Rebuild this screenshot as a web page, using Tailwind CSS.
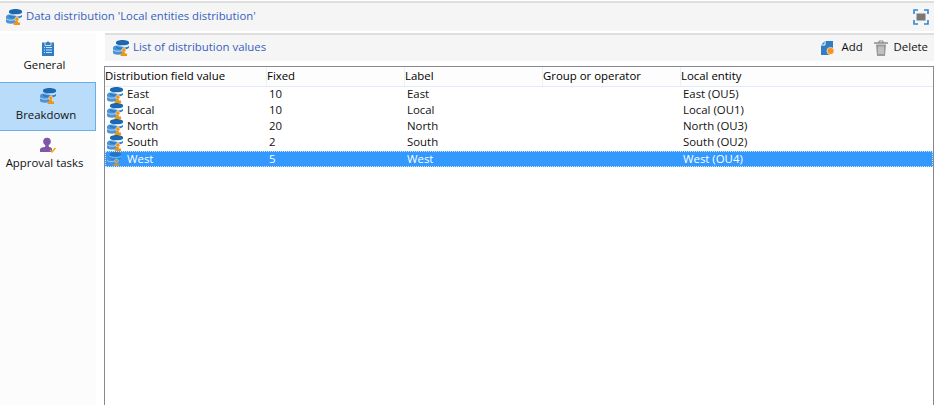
<!DOCTYPE html>
<html><head><meta charset="utf-8"><script src="https://cdn.jsdelivr.net/npm/@tailwindcss/browser@4"></script></head>
<body class="bg-white">
<svg width="0" height="0" class="absolute">
<defs>
<symbol id="db" viewBox="0 0 16 16">
<path d="M0 7.500C0 6.200 2.200 5.200 5 5.200s5 1 5 2.300v5C10 13.800 7.800 14.800 5 14.800s-5-1-5-2.300z" fill="#4a93d6"/>
<path d="M0 9.200c1 1 3 1.500 5 1.500s4-.5 5-1.500v.9c-1 1-3 1.500-5 1.500s-4-.5-5-1.500z" fill="#d5e7f7"/>
<path d="M3 2.300C3 1 5.800 0 9.500 0S16 1 16 2.300v1.500c-1.200 1-3.800 1.500-6.500 1.500S4.200 4.800 3 3.800z" fill="#1c68ae"/>
<path d="M3 4.600c1.200 1 3.800 1.500 6.500 1.500S14.800 5.600 16 4.600v.5c-1.200 1-3.800 1.500-6.500 1.500S4.200 6.100 3 5.100z" fill="#cfe2f4"/>
<path d="M3 5.900c1.200 1 3.800 1.500 6.500 1.500S14.800 6.900 16 5.900v1.300c0 1.300-2.900 2.300-6.500 2.300S3 8.500 3 7.200z" fill="#2b7cc4"/>
<circle cx="10.800" cy="10.200" r="2.100" fill="#f0950f" stroke="#fff" stroke-width=".5"/><path d="M10 12h1.600l.5 1.500H14V16H7.600v-2.500h1.900z" fill="#f0950f"/>
</symbol>
</defs>
</svg>
<div class="w-[934px] h-[405px] flex flex-col font-['Open_Sans','Noto_Sans',sans-serif] text-[11.4px] text-[#111]">
  <div class="h-[30px] mt-px shrink-0 flex items-center justify-between bg-[#f5f5f5] border-t-2 border-[#dedede] pl-[6px] pr-[5px]">
    <div class="flex items-center gap-[4px] text-[#3560c0]"><svg class="w-4 h-4"><use href="#db"/></svg><span class="-mt-[2px] text-[11.3px]">Data distribution 'Local entities distribution'</span></div>
    <svg width="16" height="16" viewBox="0 0 16 16" fill="none"><path d="M1 5V1h4M11 1h4v4M15 11v4h-4M5 15H1v-4" stroke="#2f86d6" stroke-width="1.600"/><rect x="3.500" y="4.500" width="9" height="7" fill="#787878"/></svg>
  </div>
  <div class="flex flex-1 min-h-0 mt-[2px]">
    <div class="w-[96px] shrink-0 bg-[#fcfcfc] text-center flex flex-col">
      <div class="h-[49px] flex flex-col items-center pt-[7px]">
        <svg width="16" height="16" viewBox="0 0 16 16"><path d="M2 2.500h12V16H2z" fill="#2f7dc4"/><path d="M5 2h2l1-2 1 2h2v3.500H5z" fill="#2f7dc4" stroke="#fff" stroke-width=".7"/><path d="M4 7.500h1M6 7.500h6M4 10h1M6 10h6M4 12.500h1M6 12.500h6" stroke="#cfe4f7"/></svg>
        <span class="leading-[18px] mr-[7px]">General</span>
      </div>
      <div class="h-[49px] flex flex-col items-center pt-[5px] bg-[#b9dcfb] border-y border-r border-[#68aee8]">
        <svg class="w-4 h-4"><use href="#db"/></svg>
        <span class="mt-[2px] leading-[18px] mr-[3px]">Breakdown</span>
      </div>
      <div class="flex flex-col items-center pt-[6px]">
        <svg width="18" height="17" viewBox="0 0 18 17"><circle cx="8" cy="4.500" r="3.800" fill="#7f57a8"/><path d="M6.500 7.500h3L10 10c2 .3 3 1 3 2.500v2.500H1v-2.500C1 11 3 10.300 6 10z" fill="#7f57a8"/><path d="M11 13l2 2 3.500-4" fill="none" stroke="#f0a020" stroke-width="1.400"/></svg>
        <span class="leading-[18px] mr-[7px]">Approval tasks</span>
      </div>
    </div>
    <div class="flex-1 min-w-0 ml-[8px] flex flex-col">
      <div class="h-[28px] ml-[1px] shrink-0 flex items-center justify-between bg-[#f5f5f5] border-t-2 border-[#dedede] pl-[8px] pr-[6px]">
        <div class="flex items-center gap-[4px] text-[#3560c0]"><svg class="w-4 h-4"><use href="#db"/></svg><span class="-mt-[2px]">List of distribution values</span></div>
        <div class="flex items-center">
          <svg width="16" height="16" viewBox="0 0 16 16"><path d="M1 5l4-4h8v8l-4 6H1z" fill="#2f7dc4"/><path d="M5 1v4H1" fill="none" stroke="#fff"/><circle cx="10.500" cy="11" r="3.600" fill="#f7931e" stroke="#fff" stroke-width=".6"/></svg>
          <span class="ml-[5px] -mt-[2px]">Add</span>
          <svg class="ml-[10px]" width="16" height="16" viewBox="0 0 16 16"><path d="M1 3h14" stroke="#8a8a8a" stroke-width="1.500"/><path d="M6 3V1h4v2" fill="none" stroke="#8a8a8a"/><path d="M3 4.500h10L12 16H4z" fill="#9a9a9a"/><path d="M6 6.500v7.500M8 6.500v7.500M10 6.500v7.500" stroke="#e6e6e6"/></svg>
          <span class="ml-[5px] -mt-[2px]">Delete</span>
        </div>
      </div>
      <div class="mt-[5px] flex-1 min-h-0 border-x border-t border-[#878792] bg-white">
        <div class="h-[20px] grid grid-cols-[161px_138px_138px_138px_1fr] items-center border-b border-[#e2ecf8] bg-[#fdfdfd] text-black">
          <span class="pb-[2px]">Distribution field value</span>
          <span class="self-stretch flex items-center border-l border-[#f0f0f0] pb-[2px]">Fixed</span>
          <span class="self-stretch flex items-center border-l border-[#f0f0f0] pb-[2px]">Label</span>
          <span class="self-stretch flex items-center border-l border-[#f0f0f0] pb-[2px]">Group or operator</span>
          <span class="self-stretch flex items-center border-l border-[#f0f0f0] pb-[2px]">Local entity</span>
        </div>
        <div class="h-4 grid grid-cols-[161px_138px_138px_138px_1fr] items-start leading-[14px]">
          <span class="flex items-start gap-[4px] pl-[2px]"><svg class="w-4 h-4"><use href="#db"/></svg>East</span><span class="pl-[3px]">10</span><span class="pl-[3px]">East</span><span></span><span class="pl-[3px]">East (OU5)</span>
        </div>
        <div class="h-4 grid grid-cols-[161px_138px_138px_138px_1fr] items-start leading-[14px]">
          <span class="flex items-start gap-[4px] pl-[2px]"><svg class="w-4 h-4"><use href="#db"/></svg>Local</span><span class="pl-[3px]">10</span><span class="pl-[3px]">Local</span><span></span><span class="pl-[3px]">Local (OU1)</span>
        </div>
        <div class="h-4 grid grid-cols-[161px_138px_138px_138px_1fr] items-start leading-[14px]">
          <span class="flex items-start gap-[4px] pl-[2px]"><svg class="w-4 h-4"><use href="#db"/></svg>North</span><span class="pl-[3px]">20</span><span class="pl-[3px]">North</span><span></span><span class="pl-[3px]">North (OU3)</span>
        </div>
        <div class="h-4 grid grid-cols-[161px_138px_138px_138px_1fr] items-start leading-[14px]">
          <span class="flex items-start gap-[4px] pl-[2px]"><svg class="w-4 h-4"><use href="#db"/></svg>South</span><span class="pl-[3px]">2</span><span class="pl-[3px]">South</span><span></span><span class="pl-[3px]">South (OU2)</span>
        </div>
        <div class="h-4 grid grid-cols-[160px_138px_138px_138px_1fr] items-start leading-[14px] bg-[#3399ff] text-white border border-dotted border-[#cfe6ff]">
          <span class="flex items-start gap-[4px] pl-[1px]"><svg class="w-[14px] h-[14px] opacity-70 mr-[2px]"><use href="#db"/></svg>West</span><span class="pl-[3px]">5</span><span class="pl-[3px]">West</span><span></span><span class="pl-[3px]">West (OU4)</span>
        </div>
      </div>
    </div>
  </div>
</div>
</body></html>
